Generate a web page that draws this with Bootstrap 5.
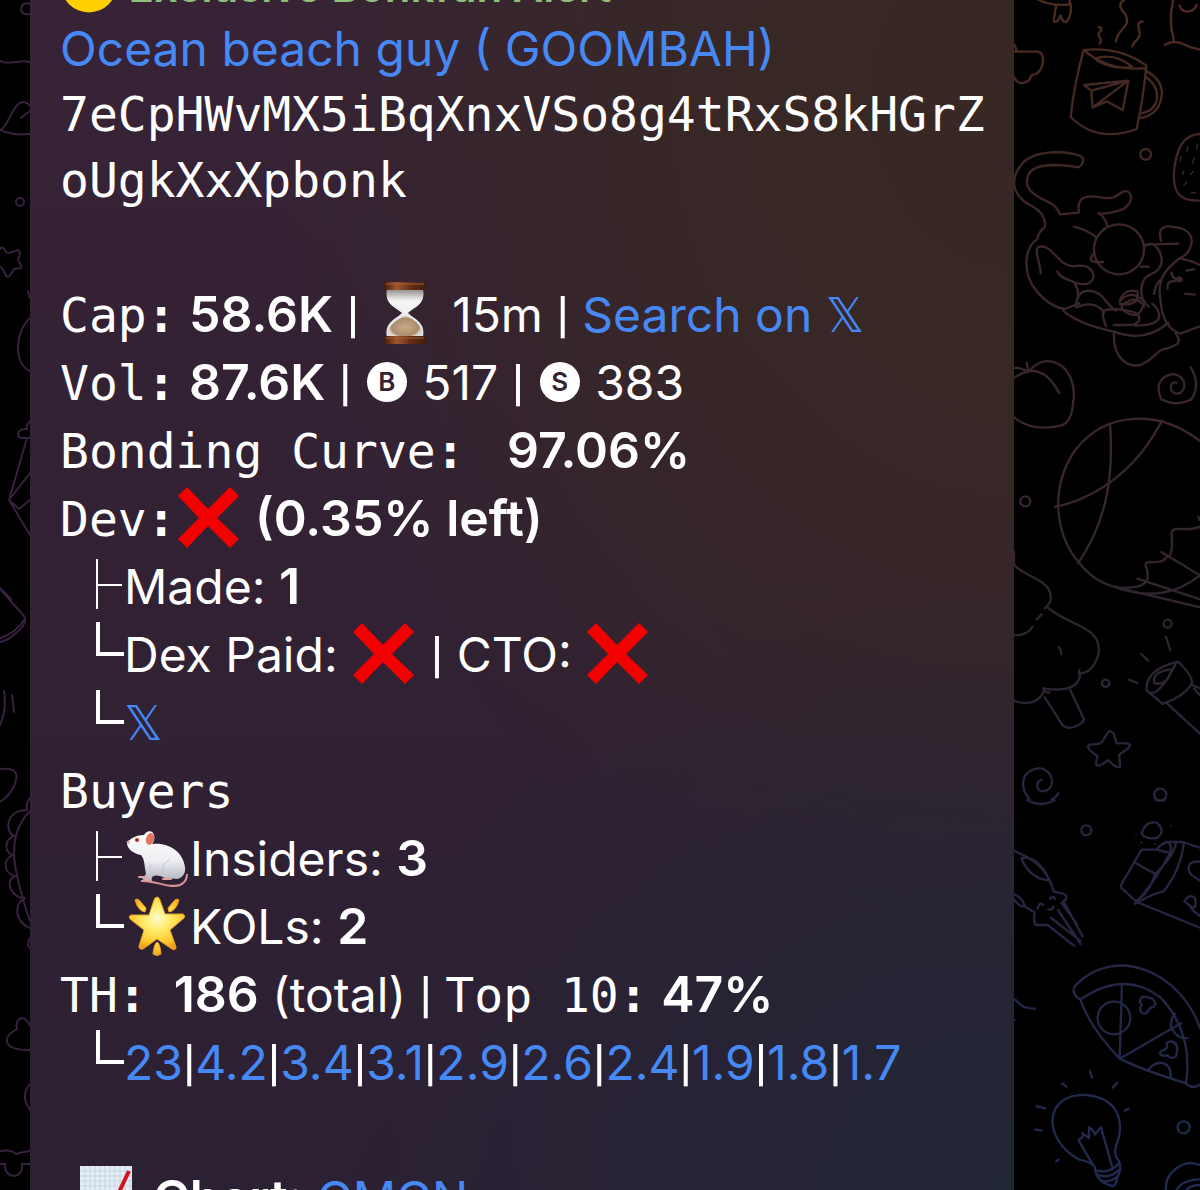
<!DOCTYPE html>
<html lang="en">
<head>
<meta charset="utf-8">
<meta name="viewport" content="width=device-width, initial-scale=1">
<title>Bonkfun Alert</title>
<link href="https://cdn.jsdelivr.net/npm/bootstrap@5.3.0/dist/css/bootstrap.min.css" rel="stylesheet">
<style>
body { background: #000; color: #fff; font-family: Inter, "Liberation Sans", sans-serif; font-size: 48px; }
.side-left { width: 30px; }
.side-right { width: 186px; }
.doodle { display: block; fill: none; stroke-linecap: round; stroke-linejoin: round; }
.bubble {
  min-width: 0; padding-left: 30px; padding-right: 20px;
  background:
    radial-gradient(ellipse 70% 50% at 100% 100%, rgba(33,38,53,1) 0%, rgba(33,38,53,0) 100%),
    radial-gradient(ellipse 75% 75% at 100% 8%, rgba(56,40,36,1) 0%, rgba(56,40,36,.85) 45%, rgba(56,40,36,0) 100%),
    linear-gradient(180deg, #372335 0%, #302133 60%, #2c2033 100%);
}
.rowline { line-height: 68px; white-space: pre; }
.rowtop { line-height: 64px; white-space: pre; }
.first-line { line-height: 68px; white-space: pre; margin-top: -47px; margin-bottom: -4px; color: #8fc07a; font-size: 42px; font-weight: 600; }
.mono { font-family: "DejaVu Sans Mono", monospace; line-height: 1; }
.address { font-family: "DejaVu Sans Mono", monospace; line-height: 66px; word-break: break-all; margin-bottom: 68px; }
.bubble a { color: #4688f4; text-decoration: none; }
.rowline > b { font-weight: 600; font-size: 50px; line-height: 1; }
.bar { font-family: Roboto, sans-serif; font-size: 50px; font-weight: 500; line-height: 1; }
.dbl { font-family: "DejaVu Sans", sans-serif; line-height: 1; }
.emo { width: 64px; height: 64px; vertical-align: -13px; margin-right: 2px; }
.coin { width: 56px; height: 56px; vertical-align: -13px; overflow: visible; margin-right: 2px; }
.tree { width: 64px; height: 64px; vertical-align: -13px; fill: none; stroke: #fff; }
.disc { display: inline-block; width: 40px; height: 40px; line-height: 40px; margin: 0 2px; border-radius: 50%; background: #fff; color: #35232f; font-size: 26px; font-weight: 600; text-align: center; vertical-align: 9px; }
.gap-row { height: 68px; }
</style>
</head>
<body>
<main class="d-flex vh-100 overflow-hidden">
  <aside class="side-left flex-shrink-0" aria-hidden="true">
    <svg class="doodle" width="30" height="1190" viewBox="0 0 30 1190" stroke="#38203f" stroke-width="2">
      <path d="M30 4c-4-2-9 0-9 5s5 6 9 5M0 61c10 5 19-2 30 1M0 130c9-3 12-28 24-28q4 1 6 4M21 118q5-4 9-7M0 130q14 6 30 4"/>
      <circle cx="20" cy="202" r="4"/>
      <path d="M0 249q3-4 6 3q3 2 11-2q5 0 1 10q4 7 3 8l-7 1q-5 10-8 7q-3-8-6-9M28 291l2 7M30 318c-16 14-16 47 0 53M27 438l-18 62l21 35M30 473l-21 27l10 9l11-9M30 421q-4 4-3 8c-11-1-12 10-3 9h6M0 588l11 11"/>
      <path d="M0 589l24 27q4 8-8 17q-7 7-16 9M24 620q-8 13-24 18M4 691q3 18-4 34M12 695l2 17M0 769q24-3 13 19q-5 9-13 14"/>
      <path d="M30 811c-25 25-17 60 0 110M30 798q-4 4-3 12c-22 0-22 22-13 26c-10 4-10 16-1 19c-11 4-9 19 2 21c-11 5-3 23 10 22c-12 6-10 24 5 30M30 938q-4 8 0 10M30 1026c-4-12-16-9-13 3c-16 9-14 21 13 21M30 1084q-10 12 0 26M0 1151q11-2 16 3q6-2 14-3M0 1164h5q-1 11 9 12q9-1 8-12h8"/>
    </svg>
  </aside>

  <article class="bubble flex-grow-1">
    <div class="first-line"><svg class="coin" viewBox="0 0 64 64" aria-hidden="true"><circle cx="33" cy="29" r="32" fill="#ffd000"/></svg> Exclusive Bonkfun Alert</div>
    <div class="rowtop"><a href="#">Ocean beach guy ( GOOMBAH)</a></div>
    <div class="address">7eCpHWvMX5iBqXnxVSo8g4tRxS8kHGrZoUgkXxXpbonk</div>

    <div class="rowline"><span class="mono">Cap<b>:</b></span> <b>58.6K</b> <span class="bar">|</span> <svg class="emo" viewBox="0 0 64 64" role="img" aria-label="hourglass"><defs><linearGradient id="wood"><stop stop-color="#3d1c10"/><stop offset=".3" stop-color="#a3562e"/><stop offset=".6" stop-color="#6a2f18"/><stop offset="1" stop-color="#3d1c10"/></linearGradient><linearGradient id="bulb" x2="0" y2="1"><stop stop-color="#8e8b88"/><stop offset=".25" stop-color="#f6f6f6"/><stop offset="1" stop-color="#dcdde4"/></linearGradient><radialGradient id="sand"><stop stop-color="#c9ab84"/><stop offset=".8" stop-color="#a98c6c"/><stop offset="1" stop-color="#e0d6cc"/></radialGradient></defs><path d="M14 8h36c3 16-9 18-15 24c6 6 18 9 15 24H14c-3-15 9-18 15-24C23 26 11 24 14 8z" fill="url(#bulb)"/><path d="M32 35c4 0 17 8 17 17l-2 5H17l-2-5c0-7 9-14 17-17z" fill="url(#sand)"/><rect x="11" y="1" width="43" height="8" rx="3" fill="url(#wood)"/><rect x="11" y="55" width="43" height="8" rx="3" fill="url(#wood)"/><path d="M13 3h38M13 57h38" stroke="#a85c30" stroke-width="1"/></svg> 15m <span class="bar">|</span> <a href="#">Search on <span class="dbl">𝕏</span></a></div>
    <div class="rowline"><span class="mono">Vol<b>:</b></span> <b>87.6K</b> <span class="bar">|</span> <span class="disc">B</span> 517 <span class="bar">|</span> <span class="disc">S</span> 383</div>
    <div class="rowline"><span class="mono">Bonding Curve<b>:</b> </span> <b>97.06%</b></div>
    <div class="rowline"><span class="mono">Dev<b>:</b></span><svg class="emo" viewBox="0 0 64 64" role="img" aria-label="no"><path d="M11 2L32 24L54 2l9 9L41 33l22 21l-9 9L32 41L11 63l-9-9L23 33L2 11z" fill="#f30000"/></svg> <b>(0.35% left)</b></div>
    <div class="rowline"><svg class="tree" viewBox="0 0 64 64" aria-hidden="true"><path d="M37 6v50M37 32h25" stroke-width="2"/></svg>Made: <b>1</b></div>
    <div class="rowline"><svg class="tree" viewBox="0 0 64 64" aria-hidden="true"><path d="M38 1v32h26" stroke-width="4"/></svg>Dex Paid: <svg class="emo" viewBox="0 0 64 64" role="img" aria-label="no"><path d="M11 2L32 24L54 2l9 9L41 33l22 21l-9 9L32 41L11 63l-9-9L23 33L2 11z" fill="#f30000"/></svg> <span class="bar">|</span> CTO: <svg class="emo" viewBox="0 0 64 64" role="img" aria-label="no"><path d="M11 2L32 24L54 2l9 9L41 33l22 21l-9 9L32 41L11 63l-9-9L23 33L2 11z" fill="#f30000"/></svg></div>
    <div class="rowline"><svg class="tree" viewBox="0 0 64 64" aria-hidden="true"><path d="M38 1v32h26" stroke-width="4"/></svg><a href="#"><span class="dbl">𝕏</span></a></div>
    <div class="rowline"><span class="mono">Buyers</span></div>
    <div class="rowline"><svg class="tree" viewBox="0 0 64 64" aria-hidden="true"><path d="M37 6v50M37 32h25" stroke-width="2"/></svg><svg class="emo" viewBox="0 0 64 64" role="img" aria-label="rat"><defs><linearGradient id="fur" x2="0" y2="1"><stop stop-color="#fff"/><stop offset=".6" stop-color="#eeeff2"/><stop offset="1" stop-color="#b4b6c2"/></linearGradient></defs><g transform="translate(1 3)"><path d="M16 53c14-1 28 8 39 4c5-2 7-6 7-11" fill="none" stroke="#d9939b" stroke-width="2"/><path d="M2 15C5 10 12 7 19 7c2-4 7-5 9-2c2 3 2 8-1 11c17-2 31 8 33 23c1 7-3 11-8 12l-12-1c-4-2-8-3-12-2l-2 4l-9-1l4-5c-2-9-1-14-5-19C9 26 2 21 2 15z" fill="url(#fur)"/><path d="M30 48c-5-3-6-7-4-12M42 50c-7-5-5-14 2-18" fill="none" stroke="#c5c7d0" stroke-width="1"/><ellipse cx="25" cy="11" rx="4" ry="6" fill="#e2735f" transform="rotate(15 25 11)"/><circle cx="12" cy="12" r="2" fill="#b82a22"/><path d="M1 14l3-2l1 4z" fill="#e59a9c"/><path d="M14 49h7M19 52h7M38 51h8" stroke="#e0a2a5" stroke-width="2" stroke-linecap="round"/></g></svg>Insiders: <b>3</b></div>
    <div class="rowline"><svg class="tree" viewBox="0 0 64 64" aria-hidden="true"><path d="M38 1v32h26" stroke-width="4"/></svg><svg class="emo" viewBox="0 0 64 64" role="img" aria-label="star"><defs><radialGradient id="gold" cx=".5" cy=".4" r=".6"><stop stop-color="#fffbd0"/><stop offset=".35" stop-color="#ffef73"/><stop offset=".8" stop-color="#fdc92e"/><stop offset="1" stop-color="#f0a01e"/></radialGradient></defs><g fill="url(#gold)" stroke="#e7a325" stroke-width="1" stroke-linejoin="round"><path d="M33 4q2 0 3 3l5 14h18q3 2 1 4L46 37l6 17q0 4-4 2L33 46L19 56q-4 1-4-3l5-16L6 26q-2-3 1-4h18l5-15q1-3 3-3z"/><path d="M11 7q2-2 4 0l7 8l-1 4q-7-1-10-12zM55 7q-2-2-4 0l-7 8l1 4q7-1 10-12zM33 49q3 1 4 12q-4 3-8 0q1-10 4-12z"/></g></svg>KOLs: <b>2</b></div>
    <div class="rowline"><span class="mono">TH<b>:</b></span>  <b>186</b> (total) <span class="bar">|</span> <span class="mono">Top 10<b>:</b></span> <b>47%</b></div>
    <div class="rowline"><svg class="tree" viewBox="0 0 64 64" aria-hidden="true"><path d="M38 1v32h26" stroke-width="4"/></svg><a href="#">23</a><span class="bar">|</span><a href="#">4.2</a><span class="bar">|</span><a href="#">3.4</a><span class="bar">|</span><a href="#">3.1</a><span class="bar">|</span><a href="#">2.9</a><span class="bar">|</span><a href="#">2.6</a><span class="bar">|</span><a href="#">2.4</a><span class="bar">|</span><a href="#">1.9</a><span class="bar">|</span><a href="#">1.8</a><span class="bar">|</span><a href="#">1.7</a></div>
    <div class="gap-row"></div>
    <div class="rowline"> <svg class="emo" viewBox="0 0 64 64" role="img" aria-label="chart"><rect x="6" y="1" width="52" height="60" fill="#e4eef4"/><path d="M11 1v60M16 1v60M21 1v60M26 1v60M31 1v60M36 1v60M41 1v60M46 1v60M51 1v60M56 1v60M6 6h52M6 11h52M6 16h52M6 21h52M6 26h52" stroke="#c3d5e0" stroke-width="1"/><path d="M10 54l18-18l10 6L55 6" fill="none" stroke="#cf1420" stroke-width="4"/></svg> <b>Chart:</b> <a href="#">GMGN</a></div>
  </article>

  <aside class="side-right flex-shrink-0" aria-hidden="true">
    <svg class="doodle" width="186" height="1190" viewBox="1014 0 186 1190" stroke-width="7">
      <defs>
        <linearGradient id="toneTop" gradientUnits="userSpaceOnUse" x1="0" y1="0" x2="0" y2="1200"><stop stop-color="#4c2b20"/><stop offset=".5" stop-color="#3c2725"/><stop offset="1" stop-color="#38262c"/></linearGradient>
        <linearGradient id="toneMid" gradientUnits="userSpaceOnUse" x1="0" y1="0" x2="0" y2="1200"><stop stop-color="#3b262b"/><stop offset=".5" stop-color="#30252f"/><stop offset="1" stop-color="#28243b"/></linearGradient>
        <linearGradient id="toneLow" gradientUnits="userSpaceOnUse" x1="0" y1="0" x2="0" y2="1200"><stop stop-color="#2a243a"/><stop offset=".5" stop-color="#232645"/><stop offset="1" stop-color="#1e2c50"/></linearGradient>
      </defs>
      <!-- mug, cat, kiwi, tomato -->
      <g transform="translate(1000 0) scale(.3333)" stroke="url(#toneTop)">
        <path d="M116 0q45 20 90 13M168 18l-7 44q10 12 20-16q11 28 20 18q20-32 7-64M296 82c10-4 10 8 1 18c-7 14 15 14 2 31M372 0c-20 10-10 30 4 42c20 44-22 38-28 82M428 64c-22 3-10 20-9 36c3 20-19 20-22 39M520 0q-16 60 2 122M495 134q25-15 55-2q25 13 50 17M539 17c8 25 42 22 51-2"/>
        <path d="M40 130q15 20 5 25h70q16 5 14 30q-3 35-35 42c-8 25-40 33-54 1"/>
        <path d="M251 150q-28 100-39 201q80 80 198 36q20-90 29-190q-80-58-188-47q74 66 186 54M284 176q60-20 112 24M292 182q45 25 96 20M439 213q55 30 45 80q-10 55-69 62M437 231q38 25 34 68q-10 38-53 41"/>
        <path d="M252 255l133-13l-17 88l-48-26l-42 18l-4-50l111-30l-107 80M252 255l22 17"/>
        <circle cx="437" cy="463" r="16"/><path d="M600 402c-50 0-70 45-78 110c-4 70 18 92 78 90"/>
        <path d="M564 440l-3 14M593 434l-3 12M543 470l-3 13M582 475l-4 14M552 512l-4 12M579 515l-7 9M560 547l-8 8M574 580l13-3" stroke-width="4"/>
        <path d="M235 502q18-10 13-29c-20-20-145-30-184 21c-37 45-24 90 20 118q55 25 51 69q-20 15-22 35c-45 30-43 110-5 155q40 50 85 56l45-17M235 502c-60-10-130-12-149 20c-20 45 20 65 50 80c35 15 35 25 44 41l57-5c-10-60 40-50 70-45c50 10 55-30 79-17c20 20-5 50-30 56q-37 12-61 8q20 10 26 36M222 680q45 12 66 32"/>
        <circle cx="357" cy="748" r="75"/>
        <path d="M122 820c0-30-20-65-9-77c40-20 60 55 105 56c60-10 70 25 58 42c-10 20-50 10-67 0q-28-8-37-26M225 852q15 25 6 48q-5 20-3 22c60-25 78 8 84 15M231 900c15-50 75-20 82-2q25 30 35 34M190 933q45 40 152 62q95 35 163-27M342 995c-5 90 50 110 84 98c45-20 40-43 76-48c50-15 35-28 25-45M318 978c-20-50-10-53 43-50c90 10 55 50 25 47h-45M359 904q12-40 53-30q10 45-52 38M359 904q35-40 75 2q-15 50-45 36q-48-20 0-40q30-10 43 18M405 977c100 0 75-45 52-66M422 800h24M446 920c-35-30-25-88 7-97q45-20 27-65q-20-40-43-20M433 734l102-3M483 722c-15-55 30-45 66-35c45 20 25 75-10 88c-60 45-65 80-58 122q5 85 60 104l59-22M462 882q5-30 17-40M540 775q30 5 60 20M503 865q-2-15 8-20l35-5M514 818q4 17 16 20M560 812l23-4M556 881l28 3M280 762q-20 25 14 24h16"/>
        <circle cx="538" cy="838" r="6" fill="#3a2728"/>
        <path d="M40 1104q24-2 45 12l-5-28M85 1116c55-70 145-20 136 84M40 1135q85-60 138 45M572 1102c25 40 18 78 0 98M530 1148c-22-6-24 26-4 33c28 2 34-30 18-48c-25-24-70-2-68 36c2 18 4 24 10 31"/>
      </g>
      <!-- ball, ice cream, torch, star -->
      <g transform="translate(1000 400) scale(.3333)" stroke="url(#toneMid)">
        <path d="M220 0q-3 68-38 77q-90 20-142-27M490 0q35 20 80 0M600 123C480 30 320 30 226 150C140 275 175 420 236 486q48 64 120 77M330 70c14 180-20 310-96 420M486 62C420 190 310 290 165 321"/>
        <path d="M595 350l5 12M600 380c-40 20-88-10-85 25q5 70-15 65q-10 20-50 16q-20 0-10 20c15 50-20 60-90 57q140 50 250-37l-116-70M412 536l188 62M360 565l240 57"/>
        <circle cx="76" cy="304" r="15"/><circle cx="503" cy="671" r="12"/><circle cx="317" cy="850" r="11"/><circle cx="481" cy="1184" r="18"/>
        <path d="M42 455v38c20 35 105 40 110 95q3 18-12 32c65 60 165 55 156 140q-15 58-55 60q-4 60-107 46q-20 60-94 36M40 706q40 3 57-25M110 658l15-15M135 625l9-10M177 742q6 7 7 20M130 865q3 15 18 12M238 810v13M134 892l54 84q20 18 59-8l5-10l-41-88"/>
        <path d="M440 871q-5-60 90-85q-60 120-90 85l48 41q60-20 86-58q10-20-38-68M462 848q-5-35 55-40q-20 55-55 40zM502 911l98 90M574 852q18 12 26 12M582 866l18 20M498 711l13 40M424 762l20 20M387 839l25 10"/>
        <path d="M323 999q8-11 18 2l9 29q55-4 34 15l-27 20q5 30 3 35q-12 6-35-19l-18 12q-28 15-14-24q-42-28-22-36q29 2 35-7z"/>
        <path d="M125 1140c-22 8-14 34 4 34c28-2 34-34 18-54c-24-28-74-12-78 28c-2 26 12 40 20 50M155 1198q13-5 21-20"/>
      </g>
      <!-- fork squid, juice box, pizza, bulb -->
      <g transform="translate(1000 800) scale(.3333)" stroke="url(#toneLow)">
        <path d="M82 0q40 24 82 0M467 0q13 5 27 0"/>
        <circle cx="259" cy="91" r="15"/><circle cx="551" cy="982" r="18"/>
        <path d="M40 152q100 35 121 122c15 8 30 0 38 15q2 10-14 20l47 64M64 174c50-10 80 55 84 67q-60-5-84-67zM40 283q25 5 36 38l28 16q-5 30 4 38h35l79 62M40 295q15 25 36 25M190 303l58 106M174 330l68 102M154 354l86 68M113 326q5-22 16-12M150 296q7-10 15 0M145 328q15 3 15-9"/>
        <path d="M600 143l-52-17h-45q-20 4-33 23h-45l-61 104q-2 15 5 15l41 38l190 77M405 188l61 34q-20 60-58 80M466 222q60-60 62-96M500 125q20 10 10 35q-45 85-105 152q60-35 85-37q50-60 62-147M470 149l40 10M600 185c-40-5-45 30-15 47l15 10M553 304q15-25 32-10q5 28-5 30zM570 320q10 15 30 28M425 102q10-40 45-34q30 25 0 46q-30 5-45-12z"/>
        <path d="M512 78h1M408 105h1M424 128h1M465 132h1" stroke-width="5"/>
        <path d="M600 685C545 520 350 430 226 556q-15 25 15 43q130-90 240-7q100 105 77 258q22 20 42 3M241 599q30 85 118 177q70 35 200 74M366 552l-7 224l184-106"/>
        <circle cx="342" cy="654" r="49"/><path d="M525 641q-15 15-11 43q20 35 48 30M442 812q25-30 50-22q22 8 20 42M420 608c0-28 20-15 35-13q20 15 5 26c-20 0-10 20-28 20q-18-5-7-28M500 730c5-12 40-5 30 28c0 18-20 20-26 8q-32 5-20-14q20 0 16-22"/>
        <path d="M285 1110q5-20-45-30c-115-60-110-200 17-195c120 10 110 110 92 150q-10 30 8 48q10 20-5 50q-5 30-20 24q-40-12-47-47zM281 1098l-46-78q18-10 12-20l20 14v-32q15 10 17 22l19-22l33 117M290 1112q40 10 67-22M292 1125q40 12 63-14M305 1142q25 6 46-10"/>
        <path d="M270 813l6 20M187 850l12 10M352 848l-14 15M110 919l26 6M106 989l18 2M374 932l11-6M168 1085l7-6M40 597l10 5q15 25 55 24M40 660h3"/>
        <path d="M498 1170c-5-50 50-95 102-75M530 1170q15-30 70-32M560 1170q10-15 40-15"/>
      </g>
    </svg>
  </aside>
</main>
<script src="https://cdn.jsdelivr.net/npm/bootstrap@5.3.0/dist/js/bootstrap.bundle.min.js"></script>
</body>
</html>
